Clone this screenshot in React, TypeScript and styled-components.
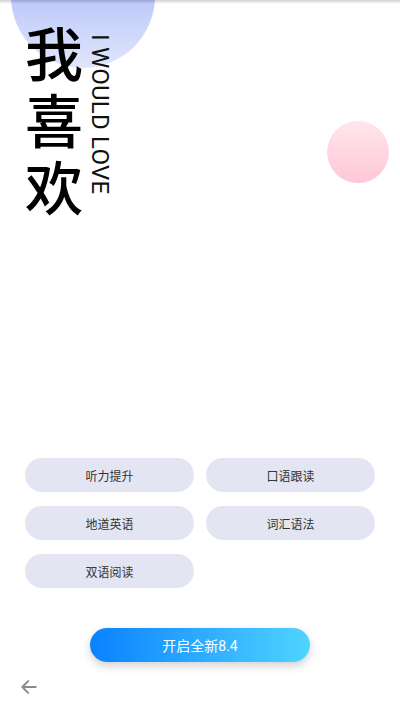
import styled, { createGlobalStyle } from "styled-components";

const topics = ["听力提升", "口语跟读", "地道英语", "词汇语法", "双语阅读"];

const GlobalStyle = createGlobalStyle`
    html, body {
        margin: 0;
        padding: 0;
        background: #ffffff;
    }
    body {
        font-family: Roboto, "Noto Sans CJK SC", sans-serif;
    }
`;

const Page = styled.div`
    position: relative;
    width: 400px;
    height: 711px;
    overflow: hidden;
    background: #ffffff;
    display: flex;
    flex-direction: column;
`;

const TopShade = styled.div`
    position: absolute;
    top: 0;
    left: 0;
    right: 0;
    height: 4px;
    background: linear-gradient(to bottom, rgba(0, 0, 0, 0.18), rgba(0, 0, 0, 0));
    z-index: 3;
`;

const Bubble = styled.div<{ $size: number; $top: number; $left: number; $from: string; $to: string }>`
    position: absolute;
    width: ${(p) => p.$size}px;
    height: ${(p) => p.$size}px;
    top: ${(p) => p.$top}px;
    left: ${(p) => p.$left}px;
    border-radius: 50%;
    background: linear-gradient(to bottom, ${(p) => p.$from}, ${(p) => p.$to});
`;

const Heading = styled.div`
    position: relative;
    z-index: 1;
    display: flex;
    align-items: flex-start;
    gap: 5px;
    padding: 18px 0 0 25px;
`;

const BigWords = styled.div`
    display: flex;
    flex-direction: column;
    font-family: "Noto Sans CJK SC", sans-serif;
    font-size: 58px;
    font-weight: 500;
    line-height: 67px;
    color: #000000;

    span {
        display: block;
        height: 67px;
    }
`;

const SideWords = styled.div`
    writing-mode: vertical-rl;
    font-family: Roboto, "Liberation Sans", sans-serif;
    font-size: 24px;
    font-weight: 400;
    line-height: 24px;
    color: #111111;
    margin-top: 16px;
    letter-spacing: 0.2px;
`;

const Topics = styled.div`
    display: grid;
    grid-template-columns: 1fr 1fr;
    column-gap: 12px;
    row-gap: 14px;
    padding: 0 25px;
    margin-top: auto;
`;

const Topic = styled.button`
    height: 34px;
    border: none;
    border-radius: 17px;
    background: #e3e6f2;
    color: #333333;
    font-family: "Noto Sans CJK SC", sans-serif;
    font-size: 12px;
    padding: 0;
`;

const Start = styled.button`
    align-self: center;
    width: 220px;
    height: 34px;
    margin-top: 40px;
    border: none;
    border-radius: 17px;
    background: linear-gradient(to right, #0a82ff, #50d4ff);
    box-shadow: 0 4px 10px rgba(0, 0, 0, 0.18);
    color: #ffffff;
    font-family: Roboto, "Noto Sans CJK SC", sans-serif;
    font-size: 14px;
    padding: 0;
`;

const Footer = styled.div`
    display: flex;
    align-items: center;
    height: 42px;
    padding: 0 0 3px 19px;
    margin-top: 4px;
`;

const App = () => {
    return (
        <Page>
            <GlobalStyle />
            <TopShade />
            <Bubble $size={144} $top={-76} $left={11} $from="#98a9f8" $to="#e0e6fc" />
            <Bubble $size={62} $top={121} $left={327} $from="#ffe6ec" $to="#ffc7d8" />
            <Heading>
                <BigWords>
                    <span>我</span>
                    <span>喜</span>
                    <span>欢</span>
                </BigWords>
                <SideWords>I WOULD LOVE</SideWords>
            </Heading>
            <Topics>
                {topics.map((t) => (
                    <Topic key={t}>{t}</Topic>
                ))}
            </Topics>
            <Start>开启全新8.4</Start>
            <Footer>
                <svg width="20" height="20" viewBox="0 0 24 24" fill="none" stroke="#8a8a8a" strokeWidth="2.4" strokeLinecap="round" strokeLinejoin="round">
                    <line x1="20" y1="12" x2="5" y2="12" />
                    <polyline points="11 5 4 12 11 19" />
                </svg>
            </Footer>
        </Page>
    );
};

export default App;
